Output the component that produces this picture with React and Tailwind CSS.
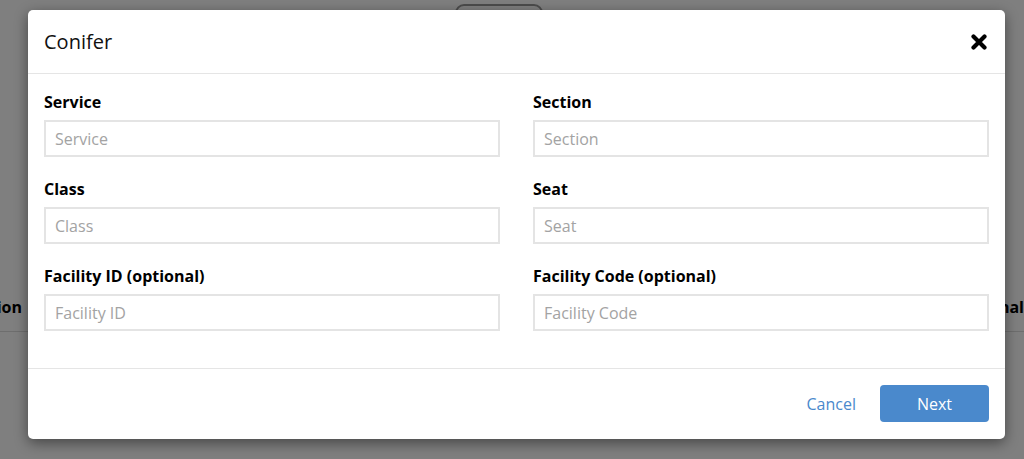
import React from 'react';

const fields = [
  { label: 'Service', placeholder: 'Service' },
  { label: 'Section', placeholder: 'Section' },
  { label: 'Class', placeholder: 'Class' },
  { label: 'Seat', placeholder: 'Seat' },
  { label: 'Facility ID (optional)', placeholder: 'Facility ID' },
  { label: 'Facility Code (optional)', placeholder: 'Facility Code' },
];

const CloseIcon = () => (
  <svg className="w-[16px] h-[16px]" viewBox="0 0 16 16" fill="none" stroke="#000">
    <path d="M2.5 2.5L13.5 13.5M13.5 2.5L2.5 13.5" strokeWidth={4.2} strokeLinecap="round" />
  </svg>
);

export default function App() {
  return (
    <div className="relative h-[459px] w-full overflow-hidden bg-white font-['Open_Sans',sans-serif]">
      {/* page behind the modal */}
      <div className="flex pt-[4px] pl-[455px]">
        <div className="h-[34px] w-[88px] rounded-[9px] border-2 border-[#999] bg-white" />
      </div>
      <div className="mt-[250px] flex items-start h-[44px] pt-[7px] border-b border-[#ddd] text-[16px] leading-[24px] font-bold text-black whitespace-nowrap">
        <div className="w-[22px] flex justify-end">Location</div>
        <div className="ml-auto">Optional</div>
      </div>

      {/* overlay */}
      <div className="absolute inset-0 bg-black/50 pl-[28px] pt-[10px]">
        <div className="w-[977px] rounded-[5px] bg-white shadow-[0_4px_14px_rgba(0,0,0,0.45)]">
          <div className="flex h-[64px] items-center justify-between border-b border-[#e5e5e5] pl-[16px] pr-[18px]">
            <h2 className="text-[20px] leading-[28px] text-[#111] font-normal">Conifer</h2>
            <button className="flex items-center justify-center">
              <CloseIcon />
            </button>
          </div>

          <div className="grid grid-cols-2 gap-x-[33px] gap-y-[21px] px-[16px] pt-[17px] pb-[37px]">
            {fields.map((f) => (
              <div key={f.label} className="flex flex-col">
                <label className="mb-[7px] text-[16px] leading-[22px] font-bold text-black">{f.label}</label>
                <input
                  placeholder={f.placeholder}
                  className="h-[37px] w-full border-2 border-[#e4e4e4] px-[9px] text-[16px] text-[#333] placeholder:text-[#a3a3a3] outline-none"
                />
              </div>
            ))}
          </div>

          <div className="flex items-center justify-end border-t border-[#e5e5e5] px-[16px] pt-[16px] pb-[17px]">
            <button className="mr-[24px] text-[16px] text-[#4a89cc]">Cancel</button>
            <button className="h-[37px] w-[109px] rounded-[4px] bg-[#4a89cc] text-[16px] text-white">Next</button>
          </div>
        </div>
      </div>
    </div>
  );
}
